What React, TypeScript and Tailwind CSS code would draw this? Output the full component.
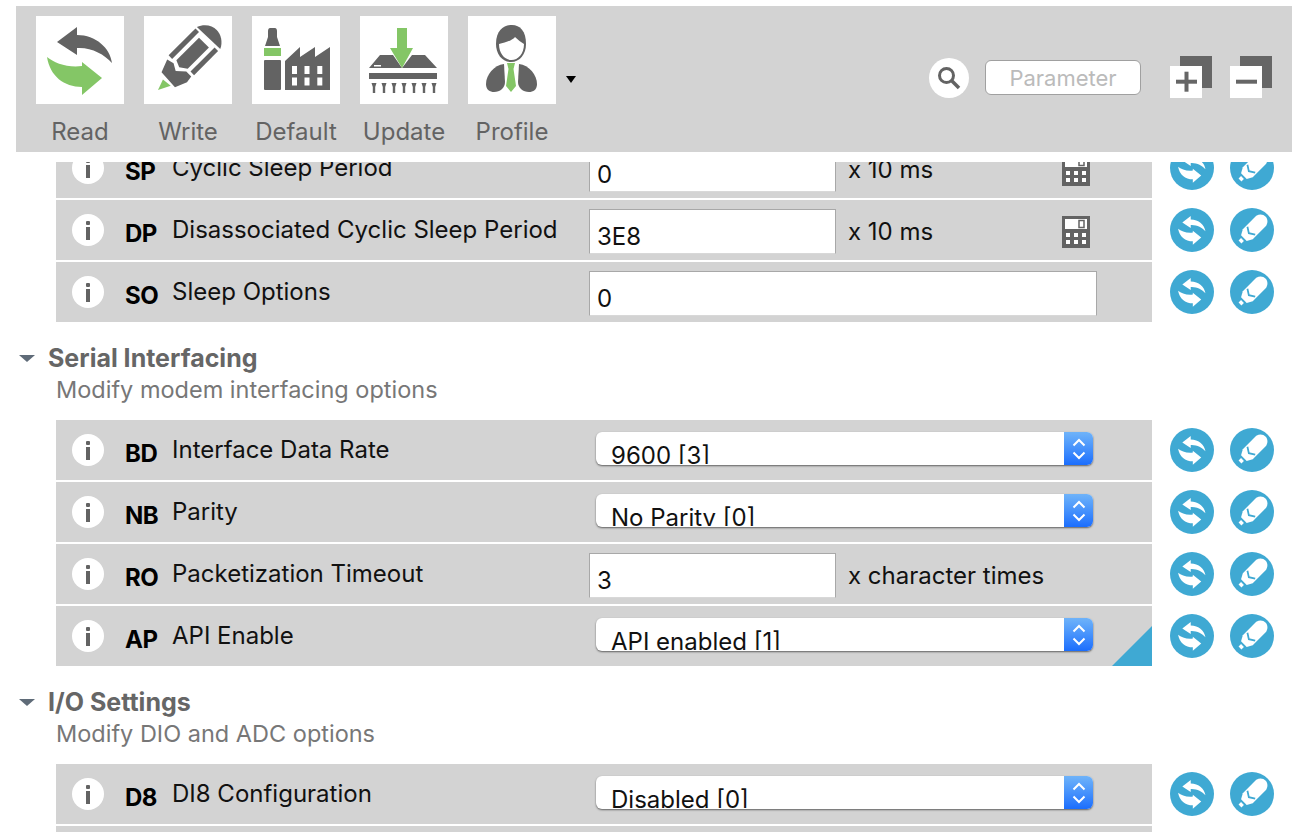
import React from 'react';

const BLUE = '#3fa9d3';
const FONT = "font-['Inter','Liberation_Sans',sans-serif]";

const SYNC_TOP = 'M21 26 L41 11 L41 19 C60 19 74 32 76 47 C68 38 55 31 41 32 L41 39 Z';
const SYNC_BOTTOM = 'M11 41 C18 47 32 52 46 50 L46 46 L66 62 L46 79 L46 71 C28 71 14 60 11 41 Z';

function ReadIcon() {
  return (
    <svg width="88" height="88" viewBox="0 0 88 88">
      <path d={SYNC_TOP} fill="#636363" />
      <path d={SYNC_BOTTOM} fill="#84c666" />
    </svg>
  );
}

function WriteIcon() {
  return (
    <svg width="88" height="88" viewBox="0 0 88 88">
      <g transform="translate(14 74) rotate(-45)">
        <path d="M0 0 L11 -4 L12 6 Z" fill="#84c666" />
        <path d="M15 -10 L28 -15 L30 -8 L26 -1 L33 7 L33 14 L26 15 L14 10 Z" fill="#636363" />
        <rect x="32" y="-17" width="38" height="5" fill="#636363" />
        <path d="M34 -8 L66 -8 L66 6 L36 6 L31 -1 Z" fill="#636363" />
        <rect x="36" y="10" width="34" height="5" fill="#636363" />
        <path d="M72 -17 C80 -14 84 -7 84 -1 C84 5 80 12 73 15 Z" fill="#636363" />
      </g>
    </svg>
  );
}

function DefaultIcon() {
  return (
    <svg width="88" height="88" viewBox="0 0 88 88">
      <path d="M16 15 C16 13 17 12 18 12 L23 12 C24 12 25 13 25 15 L25 21 L28 30 L13 30 L16 21 Z" fill="#636363" />
      <rect x="12" y="32" width="17" height="8" fill="#84c666" />
      <rect x="12" y="44" width="17" height="30" rx="1" fill="#636363" />
      <path d="M33 74 L33 45 L48 31 L48 41 L63 31 L63 41 L78 31 L78 74 Z" fill="#636363" />
      {[40, 52.5, 65.3].map((x) =>
        [50, 61.5].map((y) => <rect key={`${x}-${y}`} x={x} y={y} width="5" height="8" fill="#fff" />),
      )}
    </svg>
  );
}

function UpdateIcon() {
  return (
    <svg width="88" height="88" viewBox="0 0 88 88">
      <path d="M9 52 L20 39 L33 39 L42 52 L52 39 L65 39 L77 52 Z" fill="#636363" />
      <rect x="14" y="49" width="7" height="1.5" fill="#fff" />
      <path d="M37 12 L47 12 L47 32 L53 32 L42 52 L30 32 L37 32 Z" fill="#84c666" />
      <rect x="9" y="57" width="68" height="6" fill="#636363" />
      {[14, 24, 34, 44, 54, 64, 74].map((x) => (
        <path key={x} d={`M${x - 2.5} 67 L${x + 2.5} 67 L${x + 1.2} 71 L${x + 1.2} 77 L${x - 1.2} 77 L${x - 1.2} 71 Z`} fill="#636363" />
      ))}
    </svg>
  );
}

function ProfileIcon() {
  return (
    <svg width="88" height="88" viewBox="0 0 88 88">
      <path d="M28 28 C28 14 36 9 44 9 C52 9 58 15 58 28 C58 38 52 46 43 46 C34 46 28 38 28 28 Z" fill="#636363" />
      <path d="M31 28 C37 27 45 24 47 21 C50 24 53 26 56 28 C56 38 50 44 43.5 44 C37 44 31 38 31 28 Z" fill="#fff" />
      <path d="M36 48 C26 49 18 59 18 68 C18 74 22 76 26 76 C32 76 37 72 37 66 Z" fill="#636363" />
      <path d="M51 48 C61 49 69 59 69 68 C69 74 65 76 61 76 C55 76 50 72 50 66 Z" fill="#636363" />
      <path d="M39 47 L47 47 L45.5 53 L48 70 L43 76 L38 70 L40.5 53 Z" fill="#84c666" />
    </svg>
  );
}

function SearchIcon() {
  return (
    <svg width="40" height="40" viewBox="0 0 40 40">
      <circle cx="20" cy="20" r="20" fill="#fff" />
      <circle cx="17.5" cy="17.5" r="7" fill="none" stroke="#636363" strokeWidth="3" />
      <path d="M23 23 L30 30" stroke="#636363" strokeWidth="3.5" />
    </svg>
  );
}

function CalcIcon() {
  return (
    <svg width="28" height="32" viewBox="0 0 28 32" className="shrink-0">
      <rect width="28" height="32" fill="#636363" />
      <rect x="3" y="3" width="22" height="10" fill="#fff" />
      <rect x="17" y="4.5" width="5" height="7" fill="none" stroke="#636363" strokeWidth="1.5" />
      {[4, 12, 20].map((x) =>
        [17, 24].map((y) => <rect key={`${x}-${y}`} x={x} y={y} width="4" height="4" fill="#fff" />),
      )}
    </svg>
  );
}

function InfoIcon() {
  return (
    <svg width="32" height="32" viewBox="0 0 32 32" className="shrink-0">
      <circle cx="16" cy="16" r="16" fill="#fff" />
      <rect x="14" y="7" width="4" height="4" rx="1" fill="#636363" />
      <rect x="14" y="13" width="4" height="13" fill="#636363" />
    </svg>
  );
}

function BlueSync() {
  return (
    <svg width="44" height="44" viewBox="0 0 88 88" className="shrink-0">
      <circle cx="44" cy="44" r="44" fill={BLUE} />
      <g transform="translate(7 7) scale(0.84)">
        <path d={SYNC_TOP} fill="#fff" />
        <path d={SYNC_BOTTOM} fill="#fff" />
      </g>
    </svg>
  );
}

function BlueWrite() {
  return (
    <svg width="44" height="44" viewBox="0 0 88 88" className="shrink-0">
      <circle cx="44" cy="44" r="44" fill={BLUE} />
      <g transform="translate(20 68) rotate(-45)">
        <rect x="0" y="-4" width="7" height="8" fill="#fff" />
        <path d="M11 -8 L22 -14 L60 -14 C68 -12 72 -6 72 0 C72 6 68 12 60 14 L22 14 L11 8 Z" fill="#fff" />
        <path d="M32 -11 L25 0 L32 11" fill="none" stroke={BLUE} strokeWidth="3.5" />
      </g>
    </svg>
  );
}

function ExpandIcon({ minus }: { minus?: boolean }) {
  return (
    <svg width="42" height="42" viewBox="0 0 42 42">
      <rect x="10" width="32" height="32" fill="#666" />
      <rect y="10" width="32" height="32" fill="#fff" />
      <rect x="6" y="23.7" width="21" height="4" fill="#666" />
      {!minus && <rect x="14.5" y="15.7" width="4" height="20" fill="#666" />}
    </svg>
  );
}

function Stepper() {
  return (
    <div className="w-[29px] shrink-0 bg-gradient-to-b from-[#6fb3f9] to-[#1b6dfd] flex items-center justify-center">
      <svg width="16" height="26" viewBox="0 0 16 26" fill="none" stroke="#fff" strokeWidth="2">
        <path d="M2.5 9.5 L8 4 L13.5 9.5" />
        <path d="M2.5 16.5 L8 22 L13.5 16.5" />
      </svg>
    </div>
  );
}

type Row = {
  code: string;
  name: string;
  value: string;
  kind: 'input' | 'wide' | 'select';
  unit?: string;
  calc?: boolean;
  changed?: boolean;
};

function RowActions() {
  return (
    <div className="ml-[18px] mt-[8px] flex gap-4">
      <BlueSync />
      <BlueWrite />
    </div>
  );
}

function ParamRow({ row }: { row: Row }) {
  return (
    <div className="flex items-start h-[62px]">
      <div className="relative w-[1096px] h-[60px] bg-[#d3d3d3] flex items-start overflow-hidden">
        <div className="ml-4 mt-[14px]">
          <InfoIcon />
        </div>
        <div className="w-[37px] ml-[21px] mt-[20px] text-[24px] leading-[28px] font-bold text-black tracking-[-0.5px]">{row.code}</div>
        <div className="w-[417px] ml-[10px] mt-[15px] text-[24px] leading-[30px] text-[#111] whitespace-nowrap">{row.name}</div>
        {row.kind === 'select' ? (
          <div className="ml-[7px] mt-[12px] w-[497px] h-[33px] rounded-[6px] bg-white flex overflow-hidden shadow-[0_1px_2px_rgba(0,0,0,0.55)]">
            <div className="flex-1 h-[32px] overflow-hidden pl-[15px] pt-[10px] text-[24px] leading-[28px] text-[#111] whitespace-nowrap">{row.value}</div>
            <Stepper />
          </div>
        ) : (
          <div
            className={`mt-[9px] h-[45px] bg-white border border-[#a8a8a8] border-b-[#d8d8d8] pl-[7px] pt-[13px] text-[24px] leading-[28px] text-[#111] ${
              row.kind === 'wide' ? 'w-[508px]' : 'w-[247px]'
            }`}
          >
            {row.value}
          </div>
        )}
        {row.unit && <div className="ml-[12px] mt-[17px] w-[214px] text-[24px] leading-[30px] text-[#111] whitespace-nowrap">{row.unit}</div>}
        {row.calc && (
          <div className="mt-[16px]">
            <CalcIcon />
          </div>
        )}
        {row.changed && (
          <div className="absolute right-0 bottom-0 w-0 h-0 border-l-[40px] border-l-transparent border-b-[40px] border-b-[#3fa9d3]" />
        )}
      </div>
      <RowActions />
    </div>
  );
}

function SectionHeader({ title, desc }: { title: string; desc: string }) {
  return (
    <div className="h-[98px] -ml-10 pt-[21px]">
      <div className="flex items-center h-[30px]">
        <span className="w-0 h-0 ml-[3px] border-x-[8px] border-x-transparent border-t-[7px] border-t-[#5f6b78]" />
        <span className="ml-[13px] text-[25px] leading-[30px] font-bold text-[#666] whitespace-nowrap">{title}</span>
      </div>
      <div className="mt-[2px] ml-10 text-[23.5px] leading-[30px] text-[#777] whitespace-nowrap">{desc}</div>
    </div>
  );
}

const sleepRows: Row[] = [
  { code: 'SP', name: 'Cyclic Sleep Period', value: '0', kind: 'input', unit: 'x 10 ms', calc: true },
  { code: 'DP', name: 'Disassociated Cyclic Sleep Period', value: '3E8', kind: 'input', unit: 'x 10 ms', calc: true },
  { code: 'SO', name: 'Sleep Options', value: '0', kind: 'wide' },
];

const serialRows: Row[] = [
  { code: 'BD', name: 'Interface Data Rate', value: '9600 [3]', kind: 'select' },
  { code: 'NB', name: 'Parity', value: 'No Parity [0]', kind: 'select' },
  { code: 'RO', name: 'Packetization Timeout', value: '3', kind: 'input', unit: 'x character times' },
  { code: 'AP', name: 'API Enable', value: 'API enabled [1]', kind: 'select', changed: true },
];

const ioRows: Row[] = [{ code: 'D8', name: 'DI8 Configuration', value: 'Disabled [0]', kind: 'select' }];

const tools = [
  { label: 'Read', icon: <ReadIcon /> },
  { label: 'Write', icon: <WriteIcon /> },
  { label: 'Default', icon: <DefaultIcon /> },
  { label: 'Update', icon: <UpdateIcon /> },
  { label: 'Profile', icon: <ProfileIcon /> },
];

export default function App() {
  return (
    <div className={`w-[1300px] h-[832px] bg-white overflow-hidden flex flex-col ${FONT}`}>
      <div className="ml-4 mt-[6px] w-[1276px] h-[146px] shrink-0 bg-[#d3d3d3] flex items-start pl-5 pt-[10px]">
        <div className="flex gap-5">
          {tools.map((t) => (
            <div key={t.label} className="w-[88px] flex flex-col items-center">
              <div className="w-[88px] h-[88px] bg-white">{t.icon}</div>
              <div className="mt-[13px] text-[24px] leading-[30px] text-[#636363] whitespace-nowrap">{t.label}</div>
            </div>
          ))}
        </div>
        <span className="ml-[10px] mt-[60px] w-0 h-0 border-x-[5px] border-x-transparent border-t-[7px] border-t-black" />
        <div className="ml-[353px] mt-[42px]">
          <SearchIcon />
        </div>
        <div className="ml-4 mt-[44px] w-[156px] h-[35px] rounded-[6px] bg-white border border-[#a0a0a0] text-center text-[22px] leading-[34px] text-[#bbb]">
          Parameter
        </div>
        <div className="ml-[29px] mt-[40px] flex gap-[18px]">
          <ExpandIcon />
          <ExpandIcon minus />
        </div>
      </div>
      <div className="mt-[10px] flex-1 overflow-hidden pl-14">
        <div className="-mt-[24px]">
          {sleepRows.map((r) => (
            <ParamRow key={r.code} row={r} />
          ))}
          <div className="-mt-[2px]" />
          <SectionHeader title="Serial Interfacing" desc="Modify modem interfacing options" />
          {serialRows.map((r) => (
            <ParamRow key={r.code} row={r} />
          ))}
          <div className="-mt-[2px]" />
          <SectionHeader title="I/O Settings" desc="Modify DIO and ADC options" />
          {ioRows.map((r) => (
            <ParamRow key={r.code} row={r} />
          ))}
          <div className="w-[1096px] h-[60px] bg-[#d3d3d3]" />
        </div>
      </div>
    </div>
  );
}
